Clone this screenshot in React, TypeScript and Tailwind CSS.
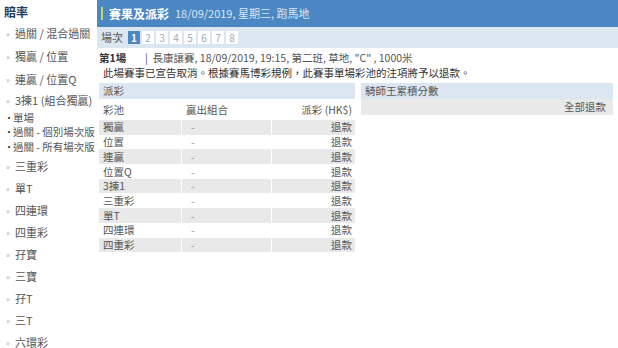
import React from "react"

const font = { fontFamily: '"Noto Sans CJK TC", "Noto Sans", sans-serif' }

const menu = [
  "過關 / 混合過關",
  "獨贏 / 位置",
  "連贏 / 位置Q",
]

const subMenu = ["單場", "過關 - 個別場次版", "過關 - 所有場次版"]

const menu2 = ["三重彩", "單T", "四連環", "四重彩", "孖寶", "三寶", "孖T", "三T", "六環彩"]

const pools = ["獨贏", "位置", "連贏", "位置Q", "3揀1", "三重彩", "單T", "四連環", "四重彩"]

function Arrow() {
  return <span className="text-[8px] text-[#aaa] w-[11px] shrink-0 pl-[2px]">»</span>
}

function Sidebar() {
  return (
    <div className="w-[97px] shrink-0 flex flex-col text-[11px] leading-[13px] text-[#555] pl-[4px] overflow-hidden">
      <div className="h-[22px] shrink-0 flex items-center font-bold text-[12px] text-[#1d3b5c]">賠率</div>
      {menu.map((m) => (
        <div key={m} className="h-[23px] shrink-0 flex items-center whitespace-nowrap">
          <Arrow />
          <span>{m}</span>
        </div>
      ))}
      <div className="h-[19px] shrink-0 flex items-center whitespace-nowrap">
        <Arrow />
        <span>3揀1 (組合獨贏)</span>
      </div>
      {subMenu.map((m) => (
        <div key={m} className="h-[14.5px] shrink-0 flex items-center whitespace-nowrap text-[10.5px]">
          <span className="w-[9px] shrink-0 text-[#333] text-[10px]">•</span>
          <span>{m}</span>
        </div>
      ))}
      <div className="h-[1.5px] shrink-0" />
      {menu2.map((m) => (
        <div key={m} className="h-[22px] shrink-0 flex items-center whitespace-nowrap">
          <Arrow />
          <span>{m}</span>
        </div>
      ))}
    </div>
  )
}

export default function App() {
  return (
    <div className="w-[618px] h-[348px] overflow-hidden bg-white flex" style={font}>
      <Sidebar />
      <div className="flex-1 flex flex-col min-w-0">
        {/* title bar */}
        <div className="h-[27px] shrink-0 bg-[#4a87c3] flex items-center pl-[4px]">
          <div className="w-[2px] h-[13px] bg-[#c6d95a] mr-[6px]" />
          <span className="text-white font-bold text-[12px]">賽果及派彩</span>
          <span className="text-[#dbe7f3] text-[11px] ml-[6px]">18/09/2019, 星期三, 跑馬地</span>
        </div>
        {/* race selector */}
        <div className="h-[21px] shrink-0 bg-[#dce6f0] flex items-center pl-[4px] text-[11px] text-[#555]">
          <span className="mr-[5px]">場次</span>
          <div className="flex gap-[2px]">
            {[1, 2, 3, 4, 5, 6, 7, 8].map((n) => (
              <div
                key={n}
                className={
                  n === 1
                    ? "w-[12px] h-[13px] flex items-center justify-center bg-[#4a87c3] text-white font-bold text-[10px]"
                    : "w-[12px] h-[13px] flex items-center justify-center bg-white text-[#9ab] text-[10px]"
                }
              >
                {n}
              </div>
            ))}
          </div>
        </div>
        {/* race info */}
        <div className="pl-[2px] pt-[2px] text-[10.5px] text-[#333] leading-[15px]">
          <div className="flex whitespace-nowrap">
            <span className="font-bold w-[46px]">第1場</span>
            <span className="text-[#555]">|&nbsp;&nbsp;長康讓賽, 18/09/2019, 19:15, 第二班, 草地, "C" , 1000米</span>
          </div>
          <div className="pl-[4px] whitespace-nowrap">此場賽事已宣告取消。根據賽馬博彩規例，此賽事單場彩池的注項將予以退款。</div>
        </div>
        {/* tables */}
        <div className="flex gap-[6px] pl-[2px] pt-[3px] text-[10.5px] text-[#555]">
          <div className="w-[256px] shrink-0">
            <div className="h-[16px] bg-[#dce6f1] flex items-center pl-[4px]">派彩</div>
            <div className="h-[21px] flex items-center">
              <div className="w-[82px] pl-[4px]">彩池</div>
              <div className="w-[90px] pl-[5px]">贏出組合</div>
              <div className="flex-1 text-right pr-[3px]">派彩 (HK$)</div>
            </div>
            {pools.map((p, i) => (
              <div
                key={p}
                className={
                  i % 2 === 0
                    ? "h-[14.7px] flex items-center bg-[#e9e9e9]"
                    : "h-[14.7px] flex items-center bg-white"
                }
              >
                <div className="w-[82px] h-full flex items-center pl-[4px]">{p}</div>
                <div className="w-[1px] h-full bg-white" />
                <div className="w-[89px] h-full flex items-center pl-[9px] text-[#999]">-</div>
                <div className="w-[1px] h-full bg-white" />
                <div className="flex-1 h-full flex items-center justify-end pr-[3px]">退款</div>
              </div>
            ))}
          </div>
          <div className="w-[252px] shrink-0">
            <div className="h-[16px] bg-[#dce6f1] flex items-center pl-[4px]">騎師王累積分數</div>
            <div className="h-[16px] bg-[#e9e9e9] flex items-center justify-end pr-[7px]">全部退款</div>
          </div>
        </div>
      </div>
    </div>
  )
}
